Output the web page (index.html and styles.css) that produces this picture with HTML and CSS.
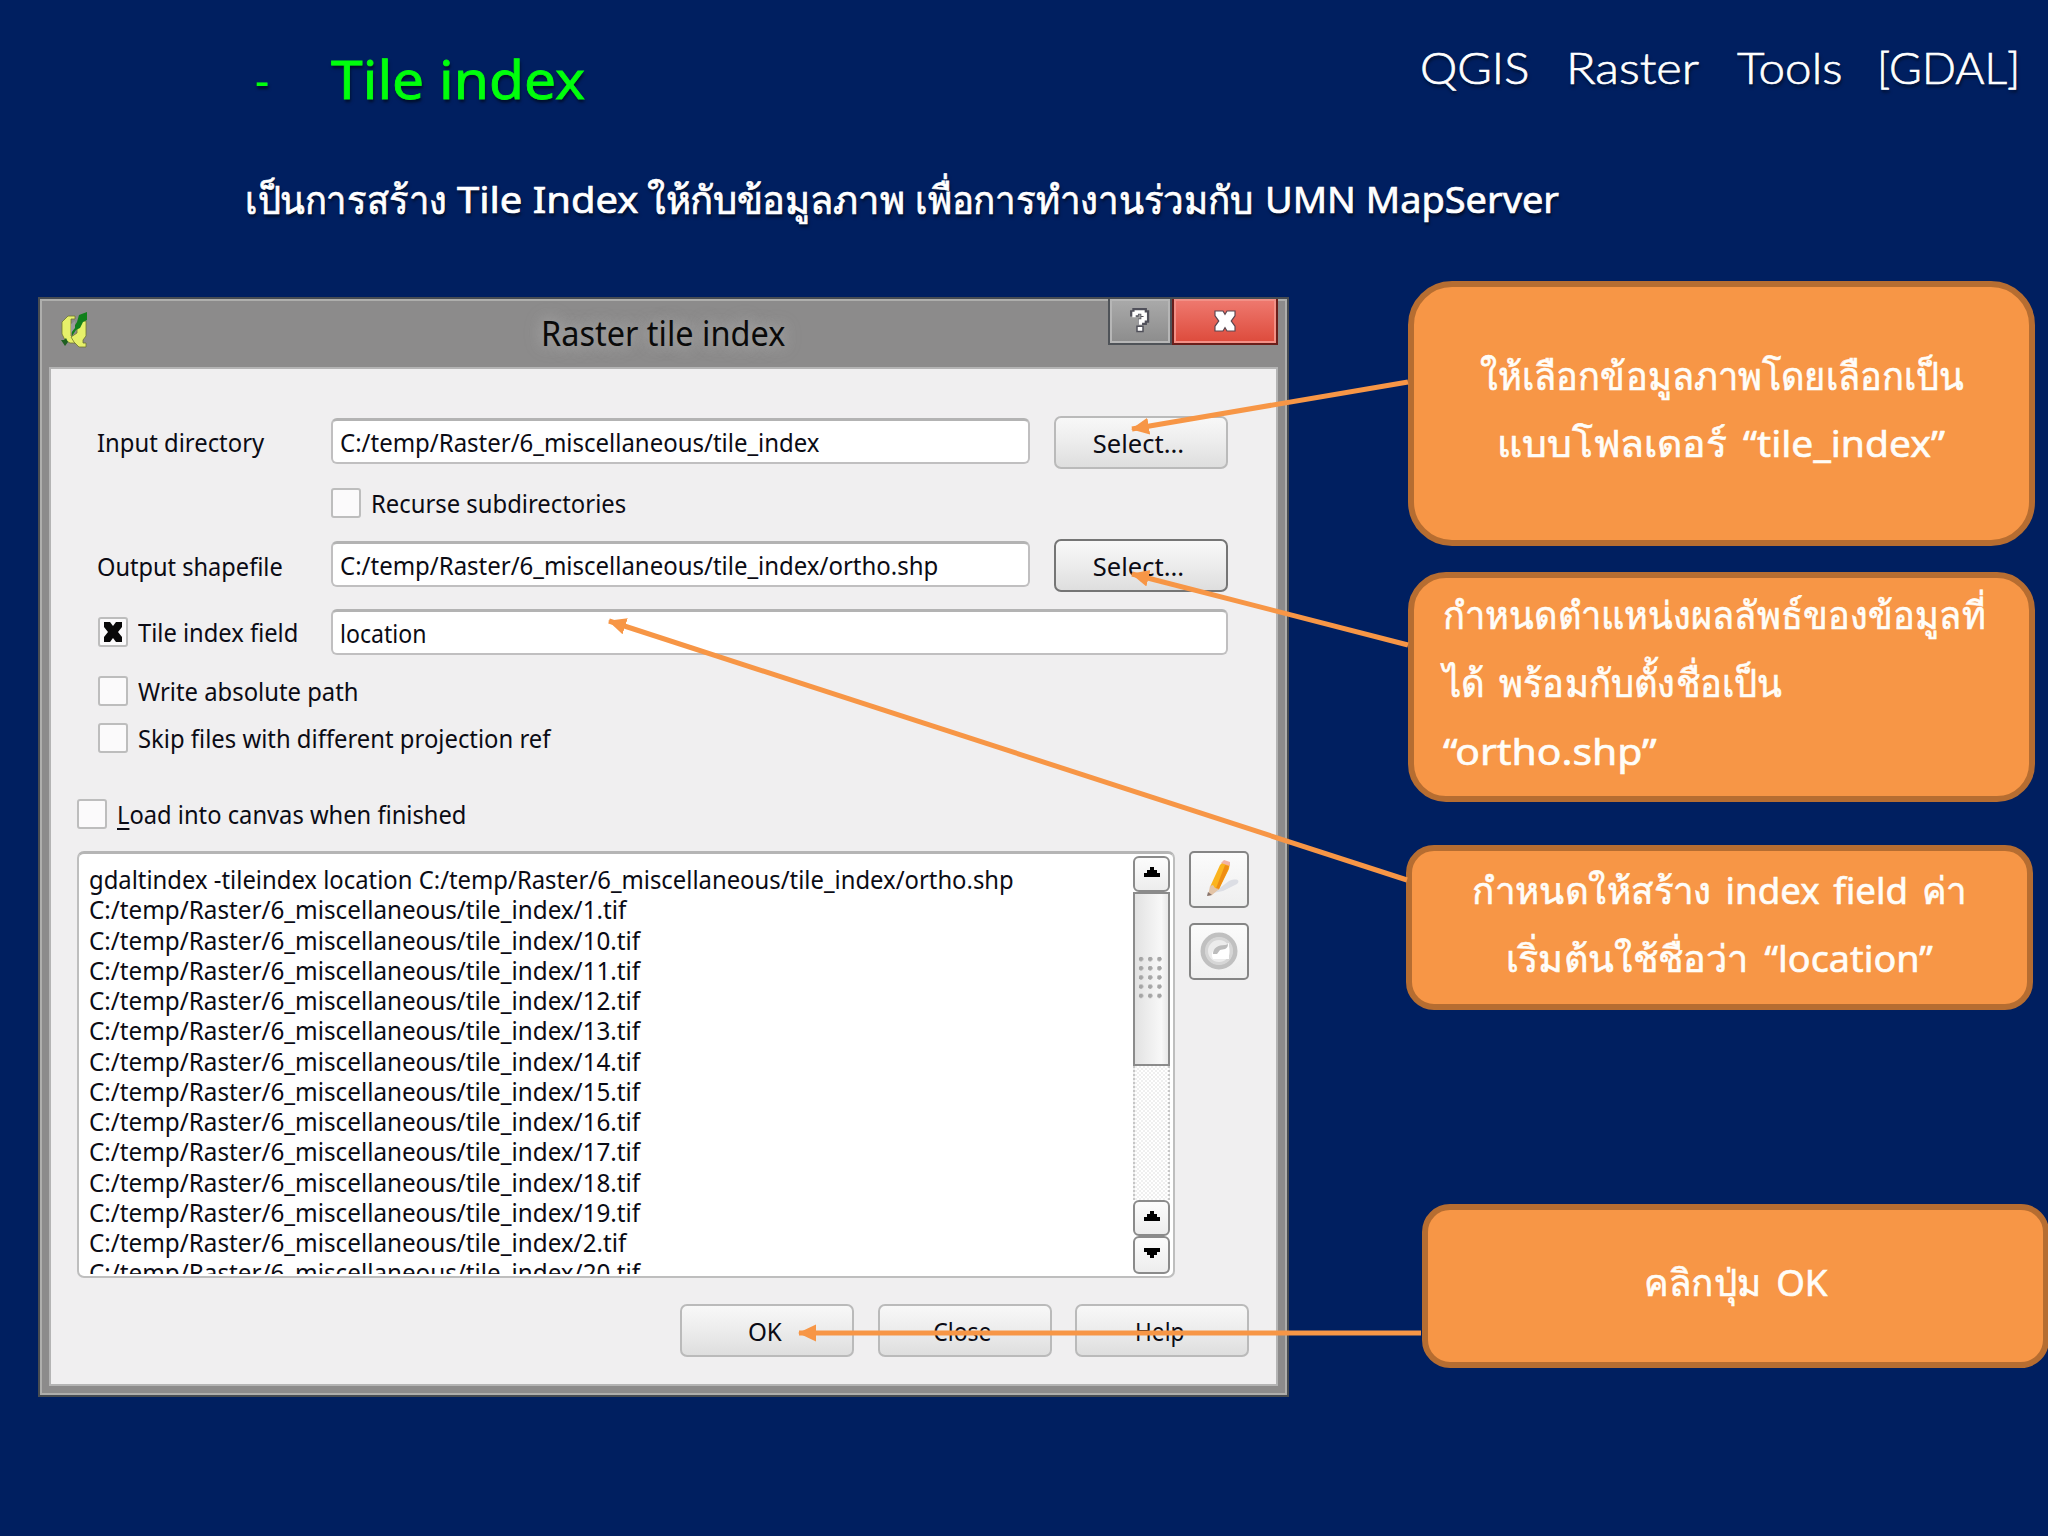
FILE: index.html
```html
<!DOCTYPE html>
<html lang="th">
<head>
<meta charset="utf-8">
<title>Tile index</title>
<link rel="stylesheet" href="styles.css">
</head>
<body>
<main class="slide">
  <header class="head">
    <h1 class="title"><span class="dash">-</span><span class="fit t-title">Tile index</span></h1>
    <p class="course"><span class="fit t-qgis">QGIS</span><span class="fit t-raster">Raster</span><span class="fit t-tools">Tools</span><span class="fit t-gdal">[GDAL]</span></p>
  </header>
  <p class="lead"><span class="fit t-l1">เป็นการสร้าง</span><span class="fit t-l2">Tile Index</span><span class="fit t-l3">ให้กับข้อมูลภาพ</span><span class="fit t-l4">เพื่อการทำงานร่วมกับ</span><span class="fit t-l5">UMN MapServer</span></p>

  <section class="window">
    <div class="titlebar">
      <svg class="app-icon" viewBox="0 0 26 36"><path d="M7 4h7v3h-4v17l4 2 1 5H9l-5-3-3-6V10z" fill="#e6f06a" stroke="#6d7430" stroke-width=".8"/><path d="M16 13l6-4h3v15l-3 4v3h3v4h-7l-5-5-3-5 6-4z" fill="#e6f06a" stroke="#6d7430" stroke-width=".8"/><path d="M26 0v8l-4 2-3 6-4 2-4 6v-6l5-8 2-7z" fill="#11801b"/><path d="M10 12v9l4-5V9z" fill="#9b9b9b"/><path d="M0 28h3l2-2 2 4-3 4-2-3z" fill="#1f5f22"/></svg>
      <span class="caption"><span class="fit t-cap">Raster tile index</span></span>
      <div class="controls">
        <span class="ctl ctl-help"><svg viewBox="0 0 24 32"><path d="M3 10V6h3V3h11v3h3v8h-3v3h-3v4" fill="none" stroke="#50505a" stroke-width="8.500"/><path d="M9 24h6v5H9z" fill="#fff" stroke="#50505a" stroke-width="4" paint-order="stroke"/><path d="M4 11V6h3V4h9v3h3v6h-3v3h-3.500v5" fill="none" stroke="#fff" stroke-width="4.500"/></svg></span>
        <span class="ctl ctl-close"><svg viewBox="0 0 28 28"><path d="M2 2h9l3 5 3-5h9v5l-5 7 5 7v5h-9l-3-5-3 5H2v-5l5-7-5-7z" fill="#fff" stroke="#5b4650" stroke-width="3" paint-order="stroke"/></svg></span>
      </div>
    </div>
    <div class="client">
      <div class="row row-in"><label class="name"><span class="fit t-in">Input directory</span></label><div class="field short"><span class="fit t-p1">C:/temp/Raster/6_miscellaneous/tile_index</span></div><button class="btn"><span class="fit t-sel">Select...</span></button></div>
      <div class="row row-rec"><i class="check"></i><span class="fit t-rec">Recurse subdirectories</span></div>
      <div class="row row-out"><label class="name"><span class="fit t-out">Output shapefile</span></label><div class="field short"><span class="fit t-p2">C:/temp/Raster/6_miscellaneous/tile_index/ortho.shp</span></div><button class="btn focus"><span class="fit t-sel">Select...</span></button></div>
      <div class="row row-fld"><label class="name"><i class="check"><svg viewBox="0 0 22 22"><path d="M2 1h6l3 4 3-4h6v5l-4 5 4 5v5h-6l-3-4-3 4H2v-5l4-5-4-5z" fill="#080808"/></svg></i><span class="fit t-fld">Tile index field</span></label><div class="field long"><span class="fit t-loc">location</span></div></div>
      <div class="row row-abs"><i class="check"></i><span class="fit t-abs">Write absolute path</span></div>
      <div class="row row-skip"><i class="check"></i><span class="fit t-skip">Skip files with different projection ref</span></div>
      <div class="row row-load"><i class="check"></i><span class="fit t-load"><u>L</u>oad into canvas when finished</span></div>
      <div class="command">
        <div class="console">
          <div class="lines">
            <p><span class="fit t-c0">gdaltindex -tileindex location C:/temp/Raster/6_miscellaneous/tile_index/ortho.shp</span></p>
            <p><span class="fit t-c1">C:/temp/Raster/6_miscellaneous/tile_index/1.tif</span></p>
            <p><span class="fit t-c1">C:/temp/Raster/6_miscellaneous/tile_index/10.tif</span></p>
            <p><span class="fit t-c1">C:/temp/Raster/6_miscellaneous/tile_index/11.tif</span></p>
            <p><span class="fit t-c1">C:/temp/Raster/6_miscellaneous/tile_index/12.tif</span></p>
            <p><span class="fit t-c1">C:/temp/Raster/6_miscellaneous/tile_index/13.tif</span></p>
            <p><span class="fit t-c1">C:/temp/Raster/6_miscellaneous/tile_index/14.tif</span></p>
            <p><span class="fit t-c1">C:/temp/Raster/6_miscellaneous/tile_index/15.tif</span></p>
            <p><span class="fit t-c1">C:/temp/Raster/6_miscellaneous/tile_index/16.tif</span></p>
            <p><span class="fit t-c1">C:/temp/Raster/6_miscellaneous/tile_index/17.tif</span></p>
            <p><span class="fit t-c1">C:/temp/Raster/6_miscellaneous/tile_index/18.tif</span></p>
            <p><span class="fit t-c1">C:/temp/Raster/6_miscellaneous/tile_index/19.tif</span></p>
            <p><span class="fit t-c1">C:/temp/Raster/6_miscellaneous/tile_index/2.tif</span></p>
            <p><span class="fit t-c1">C:/temp/Raster/6_miscellaneous/tile_index/20.tif</span></p>
          </div>
          <div class="scroll">
            <span class="sb-btn"><svg viewBox="0 0 16 10"><path d="M6 0h4v3h3v3h3v4H0V6h3V3h3z"/></svg></span>
            <span class="thumb"><i class="grip"></i></span>
            <span class="track"></span>
            <span class="sb-btn"><svg viewBox="0 0 16 10"><path d="M6 0h4v3h3v3h3v4H0V6h3V3h3z"/></svg></span>
            <span class="sb-btn last"><svg viewBox="0 0 16 10"><path d="M6 10h4V7h3V4h3V0H0v4h3v3h3z"/></svg></span>
          </div>
        </div>
        <div class="tools">
          <span class="tool"><svg viewBox="0 0 56 53"><path d="M22 40l16-12c7-3 12-1 8 3L32 38z" fill="#dcdee4"/><path d="M19 34l10-22 4-4 6 2-1 6-10 20-6 4z" fill="#fbb41e"/><path d="M34 12l4 1-1 4-9 19-4 2z" fill="#ef8d12"/><path d="M30 10l3-3 6 2v4z" fill="#f3b3a2"/><path d="M19 33l-2 10 4-1 7-6-4-1-2-3z" fill="#e3c4a6"/><path d="M16 43l1-4 4 3z" fill="#86736b"/></svg></span>
          <span class="tool"><svg viewBox="0 0 56 53"><circle cx="28" cy="26" r="16" fill="#ececec" stroke="#c0c0c0" stroke-width="5"/><circle cx="28" cy="26" r="12.500" fill="none" stroke="#d6d6d6" stroke-width="3"/><path d="M38 18v16H22c-3-6 1-12 8-12z" fill="#fff"/><path d="M37 19l-3 1c-7 0-12 3-12 9h4l3-4c3-1 8 0 8-6z" fill="#bcbcbc"/></svg></span>
        </div>
      </div>
      <div class="actions"><button class="btn"><span class="fit t-ok">OK</span></button><button class="btn"><span class="fit t-close">Close</span></button><button class="btn"><span class="fit t-help">Help</span></button></div>
    </div>
  </section>

  <aside class="callout c1"><p><span class="fit t-a1">ให้เลือกข้อมูลภาพโดยเลือกเป็น</span></p><p><span class="fit t-a2">แบบโฟลเดอร์ “tile_index”</span></p></aside>
  <aside class="callout c2"><p><span class="fit t-b1">กำหนดตำแหน่งผลลัพธ์ของข้อมูลที่</span></p><p><span class="fit t-b2">ได้ พร้อมกับตั้งชื่อเป็น</span></p><p><span class="fit t-b3">“ortho.shp”</span></p></aside>
  <aside class="callout c3"><p><span class="fit t-d1">กำหนดให้สร้าง index field ค่า</span></p><p><span class="fit t-d2">เริ่มต้นใช้ชื่อว่า “location”</span></p></aside>
  <aside class="callout c4"><p><span class="fit t-e1">คลิกปุ่ม OK</span></p></aside>

  <svg class="arrows" viewBox="0 0 2048 1536">
    <defs><marker id="head" markerUnits="userSpaceOnUse" markerWidth="18" markerHeight="18" refX="17" refY="8.500" orient="auto"><path d="M0 0L18 8.500L0 17z" fill="#f79646"/></marker></defs>
    <path d="M1408 382L1132 429"/><path d="M1408 645L1132 574"/><path d="M1407 880L609 621"/><path d="M1421 1333H799"/>
  </svg>
</main>
</body>
</html>
```
FILE: styles.css
```css
* { box-sizing: border-box; }
body { margin: 0; background: #001f60; font-family: "Noto Sans", sans-serif; }
p, h1 { margin: 0; font-weight: 400; }
.slide { position: relative; width: 2048px; height: 1536px; overflow: hidden; background: #001f60; }

/* Horizontal fitting of each label */
.fit { display: inline-block; white-space: pre; transform-origin: 0 50%; }
.t-title { transform: scaleX(1.075); }
.t-qgis { width: 146px; transform: scaleX(1.07); }
.t-raster { width: 171px; transform: scaleX(1.11); }
.t-tools { width: 140px; transform: scaleX(1.08); }
.t-gdal { width: 141px; transform: scaleX(1.015); }
.t-l1 { width: 212px; transform: scale(.98, 1.06); }
.t-l2 { width: 190px; transform: scaleX(1.08); }
.t-l3 { width: 268px; transform: scale(1.03, 1.06); }
.t-l4 { width: 350px; transform: scale(.99, 1.06); }
.t-l5 { transform: scaleX(1.025); }
.t-cap { transform: scaleX(.955); }
.t-in { transform: scaleX(.935); }
.t-rec, .t-skip, .t-abs, .t-c0 { transform: scaleX(.935); }
.t-p1, .t-p2 { transform: scaleX(.94); }
.t-out { transform: scaleX(.925); }
.t-fld, .t-load { transform: scaleX(.93); }
.t-loc { transform: scaleX(.905); }
.t-c1 { transform: scaleX(.95); }
.btn .fit { transform-origin: 50% 50%; }
.t-ok { transform: scaleX(.95); }
.t-close { transform: scaleX(.9); }
.t-help { transform: scaleX(.89); }

.head { display: flex; justify-content: space-between; height: 160px; padding: 41px 30px 0 255px; color: #fff; text-shadow: 1px 3px 3px rgba(0,0,0,.6); }
.title { display: flex; width: 330px; color: #00ff0c; font-size: 53px; line-height: 76px; }
.t-title { -webkit-text-stroke: .8px #00ff0c; }
.dash { width: 76px; font-size: 44px; }
.course { display: flex; font-family: Lato, sans-serif; font-weight: 300; font-size: 44px; line-height: 52px; -webkit-text-stroke: .7px #fff; }
.lead { display: flex; padding-left: 245px; color: #fff; font-size: 37px; line-height: 78px; text-shadow: 1px 3px 3px rgba(0,0,0,.6); -webkit-text-stroke: .7px #fff; }

.window { position: absolute; left: 38px; top: 297px; width: 1251px; height: 1100px; display: flex; flex-direction: column; padding: 0 9px 9px; background: #8c8b8b; border: 2px solid #474c52; box-shadow: inset 0 0 0 2px #aeaeac; }
.titlebar { display: flex; height: 68px; align-items: flex-start; padding-left: 12px; }
.app-icon { width: 26px; height: 36px; margin-top: 13px; }
.caption { flex: 1; padding-left: 454px; font-size: 34px; line-height: 48px; padding-top: 10px; color: #0a0a0a; text-shadow: 0 0 14px #aaa, 0 0 20px #aaa; }
.controls { display: flex; }
.ctl { display: flex; align-items: center; justify-content: center; height: 46px; border: 2px solid #4f5358; border-top: 0; }
.ctl-help { width: 64px; background: linear-gradient(#aaa, #8c8c8c); box-shadow: inset 0 0 0 2px #b6b6b6; }
.ctl-help svg { width: 18px; height: 28px; overflow: visible; }
.ctl-close { width: 106px; background: linear-gradient(#ef7a70, #dd4a3b); border-color: #6b1e1a; box-shadow: inset 0 0 0 2px #f29086; }
.ctl-close svg { width: 24px; height: 22px; overflow: visible; }

.client { flex: 1; display: flex; flex-direction: column; padding: 47px 24px 0 26px; background: #f0eff0; border: 2px solid #b4b4b4; color: #0b0b14; font-size: 25.5px; line-height: 30px; }
.row { display: flex; align-items: center; padding-left: 20px; }
.name { display: flex; align-items: center; width: 234px; }
.check { display: flex; align-items: center; justify-content: center; width: 30px; height: 30px; margin-right: 10px; border: 2px solid #bdbdbd; border-radius: 3px; background: #fbfafb; flex: none; }
.check svg { width: 22px; height: 22px; }
.field { height: 46px; padding: 6px 7px; background: #fff; border: 2px solid #c0bfc0; border-top: 3px solid #b3b3b3; border-radius: 6px; }
.short { width: 699px; margin-right: 24px; margin-bottom: 3px; }
.long { width: 897px; }
.btn { width: 174px; height: 53px; padding: 0 4px 0 0; display: flex; align-items: center; justify-content: center; font: inherit; color: inherit; border: 2px solid #bababa; border-radius: 7px; background: linear-gradient(#f8f8f8, #ececec 50%, #dedede); flex: none; }
.focus { border-color: #757575; }
.row-in { height: 53px; }
.row-in .name, .row-fld .name { padding-bottom: 1px; }
.row-in .btn, .row-out .btn { padding-right: 5px; }
.row-rec { height: 30px; margin-top: 19px; padding-left: 254px; }
.row-out { height: 53px; margin-top: 21px; }
.row-fld { height: 46px; margin-top: 17px; }
.row-fld .check { margin-left: 1px; }
.row-abs { height: 30px; margin-top: 21px; padding-left: 21px; }
.row-skip { height: 30px; margin-top: 17px; padding-left: 21px; }
.row-load { height: 30px; margin-top: 46px; padding-left: 0; }
.row-load u { text-underline-offset: 4px; text-decoration-thickness: 2px; }

.command { display: flex; gap: 14px; margin-top: 22px; }
.console { display: flex; justify-content: space-between; width: 1098px; height: 427px; padding: 2px 3px 2px 10px; background: #fff; border: 2px solid #bebebe; border-top: 3px solid #b5b5b5; border-radius: 7px; }
.lines { height: 418px; overflow: hidden; padding-top: 8px; line-height: 30.28px; }
.lines p { height: 30.28px; }
.scroll { display: flex; flex-direction: column; width: 37px; height: 418px; }
.sb-btn { display: flex; align-items: center; justify-content: center; height: 36px; border: 2px solid #8b8b8b; border-radius: 6px; background: linear-gradient(#fcfcfc, #ededed); }
.sb-btn svg { width: 16px; height: 10px; margin-bottom: 4px; }
.sb-btn.last { height: 38px; }
.thumb { display: flex; align-items: center; justify-content: center; height: 174px; border: 2px solid #8b8b8b; background: linear-gradient(90deg, #e2e2e2, #f8f8f8 80%, #e8e8e8); }
.grip { width: 27px; height: 46px; background: radial-gradient(circle at 3px 3px, #a5a5a5 2px, transparent 2.500px) 0 0 / 9.200px 9.200px; }
.track { height: 134px; border: dotted #c6c6c6; border-width: 0 2px; background: repeating-conic-gradient(#fff 0 25%, #efefef 0 50%) 0 0 / 4px 4px; }
.tools { display: flex; flex-direction: column; gap: 15px; }
.tool { width: 60px; height: 57px; border: 2px solid #858585; border-radius: 5px; background: linear-gradient(#fbfbfb, #efefef); }
.tool svg { display: block; width: 56px; height: 53px; }
.actions { display: flex; gap: 23.500px; margin-top: 26px; padding-left: 603px; }

.callout { position: absolute; width: 627px; border: 6px solid #b66d31; background: #f79646; color: #fffdf8; font-size: 36px; line-height: 68.300px; text-align: center; -webkit-text-stroke: .6px #fffdf8; }
.callout .fit { transform-origin: 50% 50%; }
.c1 { left: 1408px; top: 281px; height: 265px; border-radius: 44px; padding-top: 55px; }
.c2 { left: 1408px; top: 572px; height: 230px; border-radius: 38px; padding: 3px 0 0 29px; text-align: left; }
.callout.c2 .fit { transform-origin: 0 50%; }
.c3 { left: 1406px; top: 845px; height: 165px; border-radius: 28px; padding-top: 6px; }
.c4 { left: 1422px; top: 1204px; height: 164px; border-radius: 28px; padding-top: 39px; }
.t-a1, .t-b1 { transform: scale(1.005, 1.06); }
.t-a2 { word-spacing: 6px; transform: scale(1.085, 1.03); }
.t-b2 { word-spacing: 5px; transform: scale(1.01, 1.06); }
.t-b3 { transform: scaleX(1.135); }
.t-d1 { word-spacing: 4px; transform: scale(1.02, 1.03); }
.t-d2 { word-spacing: 6px; transform: scale(1.05, 1.03); }
.t-e1 { word-spacing: 5px; transform: scale(1.02, 1.03); }
.arrows { position: absolute; left: 0; top: 0; width: 2048px; height: 1536px; pointer-events: none; }
.arrows > path { fill: none; stroke: #f79646; stroke-width: 5; marker-end: url(#head); }
```
